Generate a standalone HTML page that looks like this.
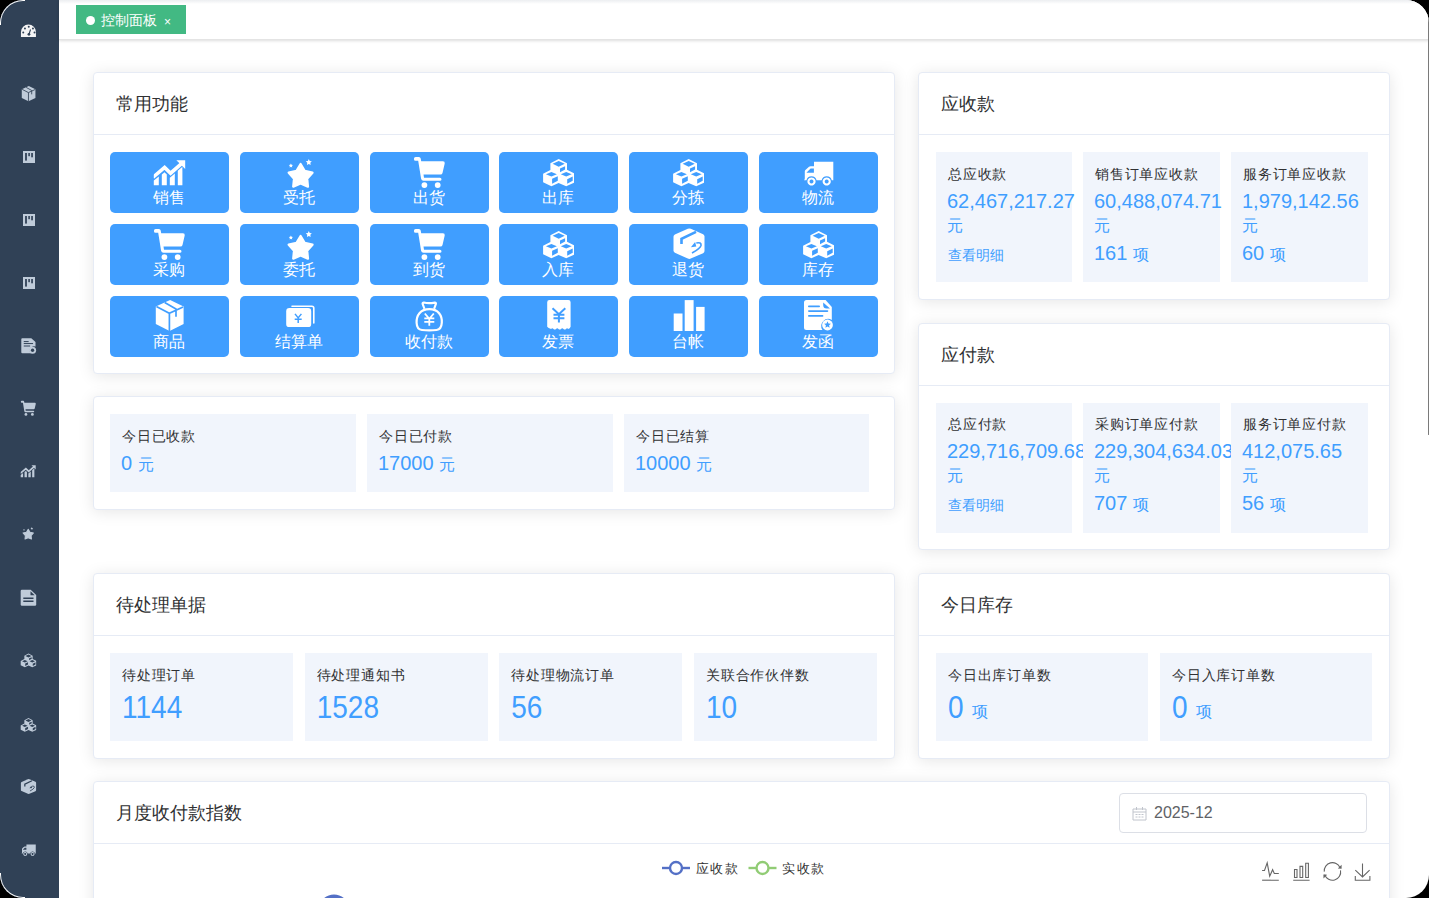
<!DOCTYPE html>
<html><head><meta charset="utf-8">
<style>
*{box-sizing:border-box;margin:0;padding:0}
html,body{width:1429px;height:898px;overflow:hidden;background:#000}
body{font-family:"Liberation Sans",sans-serif;color:#303133;position:relative}
#frame{position:absolute;left:0;top:0;width:1429px;height:898px;border-radius:23px;overflow:hidden;background:#fff}
#side{position:absolute;left:0;top:0;width:59px;height:898px;background:#304156}
#tabs{position:absolute;left:59px;top:0;width:1370px;height:40px;background:#fff;border-bottom:1px solid #e4e4e4;box-shadow:0 1px 3px 0 rgba(0,0,0,.12),0 0 3px 0 rgba(0,0,0,.04)}
#tabs:before{content:"";position:absolute;left:0;right:0;top:0;height:4px;background:linear-gradient(#eceef1,rgba(255,255,255,0))}
.tag{position:absolute;left:17px;top:5px;width:110px;height:29px;background:#42b983;color:#fff;font-size:14px;line-height:31px;padding-left:25px}
.tag:before{content:"";position:absolute;left:10px;top:11px;width:9px;height:9px;border-radius:50%;background:#fff}
.tag .x{position:absolute;left:88px;top:1.5px;font-size:12px}
.card{position:absolute;background:#fff;border:1px solid #e6ebf5;border-radius:4px;box-shadow:0 2px 16px 0 rgba(0,0,0,.1)}
.hd{position:absolute;left:0;top:0;right:0;height:62px;border-bottom:1px solid #e6ebf5;font-size:18px;line-height:61px;padding-top:1px;padding-left:22px;color:#303133}
.btn{position:absolute;width:118.6px;height:60.6px;background:#409eff;border-radius:5px;color:#fff}
.btn svg{position:absolute;left:0;top:0;width:119px;height:61px}
.btn span{position:absolute;left:0;right:0;top:35.5px;text-align:center;font-size:16px;line-height:20px;white-space:nowrap}
.box{position:absolute;background:#f1f5fc}
.t{position:absolute;left:12px;top:12px;font-size:14px;line-height:20px;color:#303133;white-space:nowrap;letter-spacing:0.8px}
.num{position:absolute;left:11px;white-space:nowrap;color:#409eff}
.n20{font-size:20px;line-height:24px}
.n28{font-size:28px;line-height:32px;left:12px}
.n28 .u{position:relative;top:-0.6px;margin-left:1px}
.n28 b{font-weight:normal;display:inline-block;transform:scaleY(1.1);transform-origin:0 25.7px}
.u{font-size:16px}
.link{position:absolute;left:12px;font-size:14px;line-height:20px;color:#409eff;white-space:nowrap}
.scroll{position:absolute;left:1428px;top:16px;width:1px;height:419px;background:#7a7a7a;border-radius:0 0 1px 1px}
.track{position:absolute;left:1423px;top:0;width:5px;height:898px;background:#fafafa}
.rim{position:absolute;width:25px;height:25px;border:1.1px solid #fff}
</style></head><body>
<svg width="0" height="0" style="position:absolute">
<defs>
<!-- icons in local coordinates -->
<symbol id="i-chart" viewBox="0 0 32 26" overflow="visible">
  <clipPath id="cp-chart"><rect x="0" y="-4" width="40" height="40"/></clipPath><polyline clip-path="url(#cp-chart)" points="-1,17.3 10.8,7.2 16.8,13 28,3.2" fill="none" style="stroke:var(--fg,#fff)" stroke-width="3.6" stroke-linejoin="miter"/>
  <polygon points="22.6,0 31.4,0 31.4,8.8" style="fill:var(--fg,#fff)"/>
  <polygon points="0,20.3 5,16.2 5,25 0,25" style="fill:var(--fg,#fff)"/>
  <polygon points="8,14.2 10.7,12 13,14.3 13,25 8,25" style="fill:var(--fg,#fff)"/>
  <polygon points="16,17.5 21,13.3 21,25 16,25" style="fill:var(--fg,#fff)"/>
  <polygon points="24,10.5 28.6,6.5 28.6,25 24,25" style="fill:var(--fg,#fff)"/>
</symbol>
<symbol id="i-star" viewBox="0 0 32 28" overflow="visible">
  <polygon points="13.80,3.00 17.86,9.92 25.69,11.64 20.36,17.63 21.15,25.61 13.80,22.40 6.45,25.61 7.24,17.63 1.91,11.64 9.74,9.92" style="fill:var(--fg,#fff);stroke:var(--fg,#fff)" stroke-width="2.3" stroke-linejoin="round"/>
  <polygon points="4.10,2.40 4.75,3.71 6.19,3.92 5.15,4.94 5.39,6.38 4.10,5.70 2.81,6.38 3.05,4.94 2.01,3.92 3.45,3.71" style="fill:var(--fg,#fff)"/>
  <polygon points="22.00,-1.90 22.94,0.01 25.04,0.31 23.52,1.79 23.88,3.89 22.00,2.90 20.12,3.89 20.48,1.79 18.96,0.31 21.06,0.01" style="fill:var(--fg,#fff)"/>
</symbol>
<symbol id="i-cart" viewBox="0 0 31 32" overflow="visible">
  <path d="M1.8,0 H5 Q6.5,0 6.8,1.5 L7.3,4.2 H29 Q31.2,4.2 30.8,6.4 L28.6,16 Q28.2,17.6 26.6,17.6 H9.6 L10.1,20.8 H26 Q27.6,20.8 27.6,22.3 Q27.6,23.8 26,23.8 H9.6 Q7.6,23.8 7.2,21.8 L4.3,3.8 H1.8 Q0,3.8 0,1.9 Q0,0 1.8,0 Z" style="fill:var(--fg,#fff)"/>
  <circle cx="10.5" cy="28.1" r="2.9" style="fill:var(--fg,#fff)"/>
  <circle cx="23.8" cy="28.1" r="2.9" style="fill:var(--fg,#fff)"/>
</symbol>
<symbol id="i-cubes" viewBox="0 0 31 28" overflow="visible">
  <path style="fill:var(--fg,#fff)" fill-rule="evenodd" d="M15.6,0 L23.9,4.3 L23.9,10.9 L30.9,14.4 L30.9,23.8 L23.1,27.3 L15.5,24 L8.3,27.3 L0,23.4 L0,14.8 L7.3,11.1 L7.3,4.3 Z
  M15.6,2.1 L9.5,4.9 L15.6,7.8 L21.6,4.9 Z
  M16.9,9.6 L22,7.4 L22,10.5 L16.9,13.3 Z
  M8.3,13.1 L2.8,15.4 L8.3,17.7 L13.8,15.4 Z
  M9,19.9 L14.7,17.3 L14.7,21.8 L9,24.9 Z
  M23.1,13.1 L17.7,15.4 L23.1,17.7 L28.6,15.4 Z
  M24.1,20.3 L29.6,17.5 L29.6,21.8 L24.1,24.9 Z"/>
</symbol>
<symbol id="i-truck" viewBox="0 0 30 24" overflow="visible">
  <path style="fill:var(--fg,#fff)" fill-rule="evenodd" d="M10,0 H29.3 V18.5 H27.76 A5.2,5.2 0 0 0 17.64,18.5 H12.56 A5.2,5.2 0 0 0 2.44,18.5 H0 Q0.8,17.8 0.8,16.5 V9.8 Q0.8,8.8 1.4,8.1 L5,4.9 Q5.7,4.4 6.6,4.4 H10 Z M2.4,10.9 L6.6,6.7 H9.9 V10.9 Z"/>
  <path style="fill:var(--fg,#fff)" fill-rule="evenodd" d="M7.5,15.6 A4.1,4.1 0 1 1 7.49,15.6 Z M7.5,17.7 A2,2 0 1 0 7.51,17.7 Z"/>
  <path style="fill:var(--fg,#fff)" fill-rule="evenodd" d="M22.7,15.6 A4.1,4.1 0 1 1 22.69,15.6 Z M22.7,17.7 A2,2 0 1 0 22.71,17.7 Z"/>
</symbol>
<symbol id="i-return" viewBox="0 0 31 31" overflow="visible">
  <path style="fill:var(--fg,#fff)" d="M14.3,0.3 Q15.8,-0.3 17.3,0.3 L29.6,5.8 Q31,6.5 31,8 V22.6 Q31,24.1 29.6,24.8 L17.3,30.2 Q15.8,30.8 14.3,30.2 L1.4,24.4 Q0,23.7 0,22.2 V8.4 Q0,6.9 1.4,6.2 Z"/>
  <path d="M8,15.5 V10.5 L22.5,3.5" fill="none" style="stroke:var(--bg,#409eff)" stroke-width="2.6"/>
  <path d="M22.8,14.6 Q28,13.5 27.5,17 Q27,20 18.5,24.6" fill="none" style="stroke:var(--bg,#409eff)" stroke-width="1.7"/>
  <path d="M17.4,18.8 L21.6,13.6 L22.8,18.2 Z" style="fill:var(--bg,#409eff)"/>
</symbol>
<symbol id="i-box" viewBox="0 0 29 32" overflow="visible">
  <path style="fill:var(--fg,#fff)" d="M14.3,0 L27.8,6.4 V24.1 L13.8,31.1 L0,24 V6.4 Z"/>
  <path d="M0.6,6.6 L13.5,13.2 L27.3,6.9 M13.6,13.2 V31.5 M8.9,2.6 L20.2,8.9 V16.8" fill="none" style="stroke:var(--bg,#409eff)" stroke-width="1.7"/>
</symbol>
<symbol id="i-bill" viewBox="0 0 29 24" overflow="visible">
  <path d="M5.8,2.7 H25.6 Q27.6,2.7 27.6,4.7 V19.4" fill="none" style="stroke:var(--fg,#fff)" stroke-width="1.6" stroke-linecap="round"/>
  <rect x="0" y="4.6" width="25" height="19" rx="3.2" style="fill:var(--fg,#fff)"/>
  <path d="M8.8,10.4 L12,14.4 L15.2,10.4 M8.5,15.8 H15.5 M12,14.4 V19.4" fill="none" style="stroke:var(--bg,#409eff)" stroke-width="1.5"/>
</symbol>
<symbol id="i-bag" viewBox="0 0 28 30" overflow="visible">
  <path d="M9.2,7.2 L7.3,2.2 Q7,0.8 8.6,0.9 Q13.4,2 19.5,0.9 Q21,0.8 20.6,2.2 L18.8,7.2" fill="none" style="stroke:var(--fg,#fff)" stroke-width="2.1" stroke-linejoin="round"/>
  <path d="M14,7.4 C23,7.4 27,13.8 26.5,21 C26.2,26.2 24.5,28 21.3,28.3 Q14,29 6.7,28.3 C3.5,28 1.5,26.2 1.3,21 C1,13.8 5,7.4 14,7.4 Z" fill="none" style="stroke:var(--fg,#fff)" stroke-width="2.2"/>
  <path d="M9.5,11.8 L14,17.2 L18.5,11.8 M9,16.7 H19 M9,20.2 H19 M14,17 V24" fill="none" style="stroke:var(--fg,#fff)" stroke-width="1.8"/>
</symbol>
<symbol id="i-receipt" viewBox="0 0 24 30" overflow="visible">
  <path style="fill:var(--fg,#fff)" d="M2.2,0 H21.2 Q23.4,0 23.4,2.2 V26.8 Q22.8,28.6 21,29 Q19.9,27.3 18.8,29 Q17.6,30 16.3,29 Q15.1,27.3 13.8,29 Q12.6,30 11.3,29 Q10.1,27.3 8.8,29 Q7.6,30 6.3,29 Q5.1,27.3 3.9,29 Q1,28.4 0,26.8 V2.2 Q0,0 2.2,0 Z"/>
  <path d="M5.3,8.2 L11.7,14.2 L18.1,8.2 M6.3,14.8 H17.2 M6.3,18.3 H17.2 M11.7,14 V22.6" fill="none" style="stroke:var(--bg,#409eff)" stroke-width="2"/>
</symbol>
<symbol id="i-bars" viewBox="0 0 31 31" overflow="visible">
  <rect x="0" y="13.4" width="8.8" height="17.5" style="fill:var(--fg,#fff)"/>
  <rect x="11" y="0" width="8.9" height="30.9" style="fill:var(--fg,#fff)"/>
  <rect x="22.4" y="6.8" width="8.5" height="24.1" style="fill:var(--fg,#fff)"/>
</symbol>
<symbol id="i-letter" viewBox="0 0 30 31" overflow="visible">
  <path style="fill:var(--fg,#fff)" d="M2.5,0 H21.6 L27.8,6.9 V20 A7,7 0 0 0 18.5,30 H2.5 Q0,30 0,27.5 V2.5 Q0,0 2.5,0 Z"/>
  <path style="fill:var(--bg,#409eff)" d="M19.2,2.4 V5 Q19.2,8.5 22.6,8.5 H26 Z"/>
  <path d="M4.8,6.4 H15.2 M4.8,11.1 H23.5 M4.8,15.9 H18.6" style="stroke:var(--bg,#409eff)" stroke-width="1.6" stroke-linecap="round"/>
  <circle cx="23.5" cy="25" r="5.4" style="fill:var(--fg,#fff)"/>
  <path style="fill:var(--bg,#409eff)" d="M23.5,21.2 L24.5,23.4 L26.9,23.7 L25.1,25.3 L25.6,27.7 L23.5,26.5 L21.4,27.7 L21.9,25.3 L20.1,23.7 L22.5,23.4 Z"/>
</symbol>
<symbol id="i-gauge" viewBox="0 0 15 12.5" overflow="visible">
  <path style="fill:var(--fg)" d="M0,12.5 V7.5 A7.5,7.5 0 0 1 15,7.5 V12.5 Z"/>
  <g style="fill:var(--bg)"><circle cx="4" cy="4" r="1"/><circle cx="7.8" cy="2.2" r="1"/><circle cx="12" cy="4" r="1"/><circle cx="2.3" cy="8" r="1"/><circle cx="13.6" cy="8" r="1"/><circle cx="8" cy="9.8" r="1.4"/></g>
  <path d="M8,9.8 L9.6,5" style="stroke:var(--bg)" stroke-width="1.1"/>
</symbol>
<symbol id="i-board" viewBox="0 0 12 12" overflow="visible">
  <rect x="0" y="0" width="12" height="12" style="fill:var(--fg)"/>
  <rect x="2.1" y="2" width="1.8" height="7.6" style="fill:var(--bg)"/>
  <rect x="5.3" y="2" width="1.6" height="3.2" style="fill:var(--bg)"/>
  <rect x="8.2" y="2" width="1.7" height="4.3" style="fill:var(--bg)"/>
</symbol>
<symbol id="i-docgear" viewBox="0 0 15 16" overflow="visible">
  <path style="fill:var(--fg)" d="M1,0 H10.2 L14.5,4 V8.5 A4.5,4.5 0 0 0 9.5,15.5 H1 Q0,15.5 0,14.5 V1 Q0,0 1,0 Z"/>
  <path d="M2.5,3.5 H7.5 M2.5,5.5 H12 M2.5,8 H9" style="stroke:var(--bg)" stroke-width="1"/>
  <circle cx="11.5" cy="12.3" r="3.6" style="fill:var(--fg)"/>
  <circle cx="11.5" cy="12.3" r="1.7" style="fill:var(--bg)"/>
</symbol>
<symbol id="i-doc" viewBox="0 0 15.5 16" overflow="visible">
  <path style="fill:var(--fg)" d="M1.2,0 H10 L15.5,5.2 V14.8 Q15.5,16 14.3,16 H1.2 Q0,16 0,14.8 V1.2 Q0,0 1.2,0 Z"/>
  <path style="fill:var(--bg)" d="M9.8,1.5 V5.5 H14 Z"/>
  <path d="M2.6,8.6 H12.8 M2.6,11.6 H12.8" style="stroke:var(--bg)" stroke-width="1.5"/>
</symbol>
</defs></svg>
<div id="frame">
<div id="side"><svg style="position:absolute;left:0;top:0" width="59" height="898" viewBox="0 0 59 898">
<use href="#i-gauge" x="20.9" y="24.5" width="15.1" height="12.5" style="--fg:#f4f4f5;--bg:#304156"/>
<use href="#i-box" x="21.7" y="86.1" width="14.4" height="15.7" style="--fg:#bfcbd9;--bg:#304156"/>
<use href="#i-board" x="23" y="151" width="12" height="12" style="--fg:#bfcbd9;--bg:#304156"/>
<use href="#i-board" x="23" y="214" width="12" height="12" style="--fg:#bfcbd9;--bg:#304156"/>
<use href="#i-board" x="23" y="277" width="12" height="12" style="--fg:#bfcbd9;--bg:#304156"/>
<use href="#i-docgear" x="21.3" y="338" width="14.7" height="16" style="--fg:#bfcbd9;--bg:#304156"/>
<use href="#i-cart" x="20.7" y="400.8" width="15.3" height="15.5" style="--fg:#bfcbd9;--bg:#304156"/>
<use href="#i-chart" x="20.7" y="465" width="15.3" height="12.8" style="--fg:#bfcbd9;--bg:#304156"/>
<use href="#i-star" x="22.2" y="527.5" width="14" height="13" style="--fg:#bfcbd9;--bg:#304156"/>
<use href="#i-doc" x="20.7" y="589.7" width="15.5" height="16" style="--fg:#bfcbd9;--bg:#304156"/>
<use href="#i-cubes" x="20.7" y="653.3" width="15.5" height="14.5" style="--fg:#bfcbd9;--bg:#304156"/>
<use href="#i-cubes" x="20.7" y="717.8" width="15.5" height="14.5" style="--fg:#bfcbd9;--bg:#304156"/>
<use href="#i-return" x="20.9" y="778.9" width="15.2" height="15.4" style="--fg:#bfcbd9;--bg:#304156"/>
<use href="#i-truck" x="21.6" y="844.1" width="14.5" height="12.3" style="--fg:#bfcbd9;--bg:#304156"/>
</svg></div>
<div id="tabs"><div class="tag">控制面板<span class="x">×</span></div></div>

<div class="card" style="left:93px;top:72px;width:802px;height:302px">
  <div class="hd">常用功能</div>
  <div class="btn" style="left:16px;top:79px"><svg viewBox="0 0 119 61"><use href="#i-chart" x="43.8" y="8.2" width="32" height="26" fill="#fff"/></svg><span>销售</span></div>
<div class="btn" style="left:146px;top:79px"><svg viewBox="0 0 119 61"><use href="#i-star" x="46.8" y="9" width="32" height="28" fill="#fff"/></svg><span>受托</span></div>
<div class="btn" style="left:276px;top:79px"><svg viewBox="0 0 119 61"><use href="#i-cart" x="43.9" y="5" width="31" height="32" fill="#fff"/></svg><span>出货</span></div>
<div class="btn" style="left:405px;top:79px"><svg viewBox="0 0 119 61"><use href="#i-cubes" x="44.1" y="6.9" width="31" height="28" fill="#fff"/></svg><span>出库</span></div>
<div class="btn" style="left:535px;top:79px"><svg viewBox="0 0 119 61"><use href="#i-cubes" x="44.1" y="6.9" width="31" height="28" fill="#fff"/></svg><span>分拣</span></div>
<div class="btn" style="left:665px;top:79px"><svg viewBox="0 0 119 61"><use href="#i-truck" x="45" y="9.8" width="30" height="24" fill="#fff"/></svg><span>物流</span></div>
<div class="btn" style="left:16px;top:151px"><svg viewBox="0 0 119 61"><use href="#i-cart" x="43.9" y="5" width="31" height="32" fill="#fff"/></svg><span>采购</span></div>
<div class="btn" style="left:146px;top:151px"><svg viewBox="0 0 119 61"><use href="#i-star" x="46.8" y="9" width="32" height="28" fill="#fff"/></svg><span>委托</span></div>
<div class="btn" style="left:276px;top:151px"><svg viewBox="0 0 119 61"><use href="#i-cart" x="43.9" y="5" width="31" height="32" fill="#fff"/></svg><span>到货</span></div>
<div class="btn" style="left:405px;top:151px"><svg viewBox="0 0 119 61"><use href="#i-cubes" x="44.1" y="6.9" width="31" height="28" fill="#fff"/></svg><span>入库</span></div>
<div class="btn" style="left:535px;top:151px"><svg viewBox="0 0 119 61"><use href="#i-return" x="44.5" y="4.4" width="31" height="31" fill="#fff"/></svg><span>退货</span></div>
<div class="btn" style="left:665px;top:151px"><svg viewBox="0 0 119 61"><use href="#i-cubes" x="44.1" y="6.9" width="31" height="28" fill="#fff"/></svg><span>库存</span></div>
<div class="btn" style="left:16px;top:223px"><svg viewBox="0 0 119 61"><use href="#i-box" x="45.8" y="4" width="29" height="32" fill="#fff"/></svg><span>商品</span></div>
<div class="btn" style="left:146px;top:223px"><svg viewBox="0 0 119 61"><use href="#i-bill" x="46.2" y="7.5" width="29" height="24" fill="#fff"/></svg><span>结算单</span></div>
<div class="btn" style="left:276px;top:223px"><svg viewBox="0 0 119 61"><use href="#i-bag" x="45.3" y="5.7" width="28" height="30" fill="#fff"/></svg><span>收付款</span></div>
<div class="btn" style="left:405px;top:223px"><svg viewBox="0 0 119 61"><use href="#i-receipt" x="48.2" y="4" width="24" height="30" fill="#fff"/></svg><span>发票</span></div>
<div class="btn" style="left:535px;top:223px"><svg viewBox="0 0 119 61"><use href="#i-bars" x="44.7" y="4.1" width="31" height="31" fill="#fff"/></svg><span>台帐</span></div>
<div class="btn" style="left:665px;top:223px"><svg viewBox="0 0 119 61"><use href="#i-letter" x="45" y="4" width="30" height="31" fill="#fff"/></svg><span>发函</span></div>
</div>

<div class="card" style="left:93px;top:396px;width:802px;height:114px">
  <div class="box" style="left:16px;top:17px;width:246px;height:78px"><div class="t">今日已收款</div><div class="num n20" style="top:37px">0 <span class="u">元</span></div></div>
  <div class="box" style="left:273px;top:17px;width:246px;height:78px"><div class="t">今日已付款</div><div class="num n20" style="top:37px">17000 <span class="u">元</span></div></div>
  <div class="box" style="left:530px;top:17px;width:245px;height:78px"><div class="t">今日已结算</div><div class="num n20" style="top:37px">10000 <span class="u">元</span></div></div>
</div>

<div class="card" style="left:918px;top:72px;width:472px;height:228px">
  <div class="hd">应收款</div>
  <div class="box" style="left:17px;top:79px;width:136px;height:130px"><div class="t">总应收款</div><div class="num n20" style="top:37px">62,467,217.27</div><div class="num u" style="top:63.5px;line-height:20px">元</div><div class="link" style="top:93px">查看明细</div></div>
  <div class="box" style="left:164px;top:79px;width:137px;height:130px"><div class="t">销售订单应收款</div><div class="num n20" style="top:37px">60,488,074.71</div><div class="num u" style="top:63.5px;line-height:20px">元</div><div class="num n20" style="top:89px">161 <span class="u">项</span></div></div>
  <div class="box" style="left:312px;top:79px;width:137px;height:130px"><div class="t">服务订单应收款</div><div class="num n20" style="top:37px">1,979,142.56</div><div class="num u" style="top:63.5px;line-height:20px">元</div><div class="num n20" style="top:89px">60 <span class="u">项</span></div></div>
</div>

<div class="card" style="left:918px;top:323px;width:472px;height:227px">
  <div class="hd">应付款</div>
  <div class="box" style="left:17px;top:79px;width:136px;height:130px"><div class="t" style="top:11px">总应付款</div><div class="num n20" style="top:35.8px">229,716,709.68</div><div class="num u" style="top:62.8px;line-height:20px">元</div><div class="link" style="top:92.3px">查看明细</div></div>
  <div class="box" style="left:164px;top:79px;width:137px;height:130px"><div class="t" style="top:11px">采购订单应付款</div><div class="num n20" style="top:35.8px">229,304,634.03</div><div class="num u" style="top:62.8px;line-height:20px">元</div><div class="num n20" style="top:88px">707 <span class="u">项</span></div></div>
  <div class="box" style="left:312px;top:79px;width:137px;height:130px"><div class="t" style="top:11px">服务订单应付款</div><div class="num n20" style="top:35.8px">412,075.65</div><div class="num u" style="top:62.8px;line-height:20px">元</div><div class="num n20" style="top:88px">56 <span class="u">项</span></div></div>
</div>

<div class="card" style="left:93px;top:573px;width:802px;height:186px">
  <div class="hd">待处理单据</div>
  <div class="box" style="left:16px;top:79px;width:183px;height:88px"><div class="t">待处理订单</div><div class="num n28" style="top:39.5px"><b>1144</b></div></div>
  <div class="box" style="left:210.7px;top:79px;width:183px;height:88px"><div class="t">待处理通知书</div><div class="num n28" style="top:39.5px"><b>1528</b></div></div>
  <div class="box" style="left:405.3px;top:79px;width:183px;height:88px"><div class="t">待处理物流订单</div><div class="num n28" style="top:39.5px"><b>56</b></div></div>
  <div class="box" style="left:600px;top:79px;width:183px;height:88px"><div class="t">关联合作伙伴数</div><div class="num n28" style="top:39.5px"><b>10</b></div></div>
</div>

<div class="card" style="left:918px;top:573px;width:472px;height:186px">
  <div class="hd">今日库存</div>
  <div class="box" style="left:17px;top:79px;width:212px;height:88px"><div class="t">今日出库订单数</div><div class="num n28" style="top:39.5px"><b>0</b> <span class="u">项</span></div></div>
  <div class="box" style="left:241px;top:79px;width:212px;height:88px"><div class="t">今日入库订单数</div><div class="num n28" style="top:39.5px"><b>0</b> <span class="u">项</span></div></div>
</div>

<div class="card" style="left:93px;top:781px;width:1297px;height:200px">
  <div class="hd">月度收付款指数</div>
  <div style="position:absolute;left:1025px;top:11px;width:248px;height:40px;border:1px solid #dcdfe6;border-radius:4px;background:#fff">
  <svg style="position:absolute;left:12px;top:12px" width="15" height="15" viewBox="0 0 15 15">
    <path d="M1,3 H14 V14 H1 Z M1,6 H14" fill="none" stroke="#c0c4cc" stroke-width="1"/>
    <path d="M4.5,1 V4 M10.5,1 V4" stroke="#c0c4cc" stroke-width="1"/>
    <path d="M3.5,8.5 H5.5 M6.5,8.5 H8.5 M9.5,8.5 H11.5 M3.5,11 H5.5 M6.5,11 H8.5 M9.5,11 H11.5" stroke="#c0c4cc" stroke-width="1"/>
  </svg>
  <div style="position:absolute;left:34px;top:0;line-height:38px;font-size:16px;color:#606266">2025-12</div>
</div>
<svg style="position:absolute;left:0;top:62px" width="1295" height="60" viewBox="0 0 1295 60">
  <g transform="translate(-94,-844)">
    <path d="M662,868 H690" stroke="#5470c6" stroke-width="2.4"/>
    <circle cx="676" cy="868" r="6" fill="#fff" stroke="#5470c6" stroke-width="2.4"/>
    <path d="M748.5,868 H776.5" stroke="#91cc75" stroke-width="2.4"/>
    <circle cx="762.5" cy="868" r="6" fill="#fff" stroke="#91cc75" stroke-width="2.4"/>
    <circle cx="334" cy="910" r="15.5" fill="#5470c6"/>
    <g fill="none" stroke="#666" stroke-width="1.1">
      <path d="M1262.1,880.2 H1278.8"/>
      <path d="M1262.1,870.5 H1264.5 L1267.2,862.8 L1269.7,876.2 L1272.6,869.7 L1274.3,873.5 H1278.8" stroke-linejoin="miter"/>
      <path d="M1293.2,880.2 H1309.6 M1294.5,877.5 V869.5 H1297 V877.5 Z M1300,877.5 V866.4 H1302.7 V877.5 Z M1305.7,877.5 V863.3 H1308.4 V877.5 Z"/>
      <path d="M1324.3,871.6 A8.2,8.2 0 0 1 1340,867.6"/>
      <path d="M1340.5,870.3 A8.2,8.2 0 0 1 1324.7,874.6"/>
      <path d="M1362.5,863.4 V877 M1355.3,870.1 L1362.5,877 L1369.6,870.1 M1355.3,876 V880.2 H1369.9 V876"/>
    </g>
    <path d="M1341.6,864.8 L1341.6,868.8 L1337.8,868.6 Z M1323.5,878.6 L1323.4,874.5 L1327.2,874.8 Z" fill="#666"/>
    <text x="695.5" y="872.5" font-size="13" letter-spacing="1.5" fill="#333" font-family="Liberation Sans, sans-serif">应收款</text>
    <text x="782" y="872.5" font-size="13" letter-spacing="1.5" fill="#333" font-family="Liberation Sans, sans-serif">实收款</text>
  </g>
</svg>

</div>
<div class="scroll"></div>
<div class="rim" style="left:0;top:0;border-right:0;border-bottom:0;border-top-left-radius:23px"></div>
<div class="rim" style="left:0;top:873px;border-right:0;border-top:0;border-bottom-left-radius:23px"></div>
</div>
</body></html>
